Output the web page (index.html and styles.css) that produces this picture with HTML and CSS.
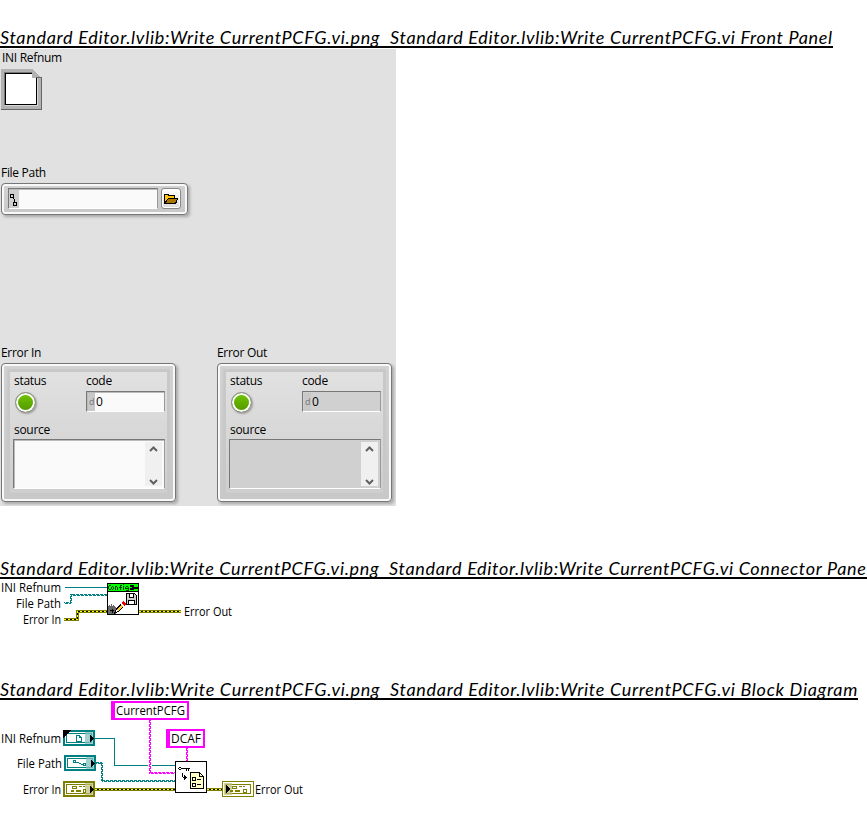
FILE: index.html
```html
<!DOCTYPE html>
<html lang="en">
<head>
<meta charset="utf-8">
<title>Write CurrentPCFG.vi</title>
<link rel="stylesheet" href="styles.css">
</head>
<body>
<section class="section front">
  <h2 class="heading"><span class="title">Standard Editor.lvlib:Write CurrentPCFG.vi.png&nbsp; Standard Editor.lvlib:Write CurrentPCFG.vi Front Panel</span></h2>
  <div class="panel">
    <div class="label refnum-label">INI Refnum</div>
    <svg class="refnum" width="42" height="42" shape-rendering="crispEdges">
      <path fill="#b2b2b2" d="M1 0H32L41 9V41H1Z"/>
      <path fill="#777" d="M4 3H32V4H5V36H4Z"/>
      <path fill="#d9d9d9" d="M37 9h1v28H5v-1h32z"/>
      <rect x="5" y="4" width="32" height="32"/>
      <rect x="6" y="5" width="30" height="30" fill="#fff"/>
      <path fill="#b2b2b2" d="M32 0L41 9H32Z"/>
      <path fill="#e1e1e1" d="M33 0H42V8H41Z"/>
      <path fill="#666" d="M36 8H42V41H1V40H41V9H36Z"/>
    </svg>
    <div class="label path-label">File Path</div>
    <div class="frame path-frame">
      <div class="well path-field">
        <svg width="10" height="18" shape-rendering="crispEdges"><rect width="10" height="18" fill="#cfcfcf"/><path fill="none" stroke="#000" d="M1.500 4.500h3v3h-3zM4.500 12.500h3v3h-3zM4.500 7v2M5.500 9v3"/></svg>
      </div>
      <div class="browse">
        <svg width="16" height="12" shape-rendering="crispEdges"><path d="M1 1h5v1h6v3h3v1l-2 5H1z"/><path fill="#ffc20e" d="M2 2h3v1h6v2H5L3 8H2z"/><path fill="#a87500" d="M5 6h9l-2 4H3z"/></svg>
      </div>
    </div>
    <div class="clusters">
      <div class="cluster-col">
        <div class="label">Error In</div>
        <div class="frame cluster">
          <div class="inner">
            <div class="top-row">
              <div class="status"><div class="label">status</div><div class="led"></div></div>
              <div class="code"><div class="label">code</div><div class="well number"><span class="radix">d</span><span class="value">0</span></div></div>
            </div>
            <div class="label source-label">source</div>
            <div class="well source"><div class="scroll">
              <svg width="9" height="6"><path d="M1 5l3.500-3.500L8 5"/></svg>
              <svg width="9" height="6"><path d="M1 1l3.500 3.500L8 1"/></svg>
            </div></div>
          </div>
        </div>
      </div>
      <div class="cluster-col indicator">
        <div class="label">Error Out</div>
        <div class="frame cluster">
          <div class="inner">
            <div class="top-row">
              <div class="status"><div class="label">status</div><div class="led"></div></div>
              <div class="code"><div class="label">code</div><div class="well number"><span class="radix">d</span><span class="value">0</span></div></div>
            </div>
            <div class="label source-label">source</div>
            <div class="well source"><div class="scroll">
              <svg width="9" height="6"><path d="M1 5l3.500-3.500L8 5"/></svg>
              <svg width="9" height="6"><path d="M1 1l3.500 3.500L8 1"/></svg>
            </div></div>
          </div>
        </div>
      </div>
    </div>
  </div>
</section>

<section class="section connector">
  <h2 class="heading"><span class="title">Standard Editor.lvlib:Write CurrentPCFG.vi.png&nbsp; Standard Editor.lvlib:Write CurrentPCFG.vi Connector Pane</span></h2>
  <svg class="diagram" width="320" height="61" viewBox="0 579 320 61">
    <g class="text">
      <text x="1" y="592" textLength="60" lengthAdjust="spacingAndGlyphs">INI Refnum</text>
      <text x="16" y="608" textLength="45" lengthAdjust="spacingAndGlyphs">File Path</text>
      <text x="23" y="624" textLength="38" lengthAdjust="spacingAndGlyphs">Error In</text>
      <text x="184" y="616" textLength="48" lengthAdjust="spacingAndGlyphs">Error Out</text>
    </g>
    <g shape-rendering="crispEdges">
      <path class="ref" d="M65 587.500H107"/>
      <path class="path-a" d="M65 603.500H71M72 594.500H107"/>
      <path class="path-b" d="M64 602.500H72M71 595.500H107"/>
      <path class="path-a" d="M70.500 603V594"/><path class="path-b" d="M71.500 603V594"/>
      <path class="err" d="M64 619.500H77.500V611.500H107M139 611.500H181"/>
      <path class="err-base" d="M64 619.500H77.500V611.500H107M139 611.500H181"/>
      <path class="err-core" d="M64 619.500H77.500V611.500H107M139 611.500H181"/>
      <rect x="107.500" y="583.500" width="31" height="31" fill="#fff" stroke="#000"/>
      <rect x="107.500" y="583.500" width="31" height="8" fill="#0f0" stroke="#000"/>
      <path fill="none" stroke="#003c00" d="M109 585.500h2M108.500 586v3M109 589.500h2M113.500 587v2M111.500 587v2M112 586.500h1M112 589.500h1M115.500 586v4M116 586.500h1M117.500 587v3M120.500 585v5M119 587.500h3M121 585.500h1M123.500 586v4M123 584.500h1M125.500 587v2M126 586.500h2M128.500 587v4M126 588.500h2M126 590.500h2"/>
      <path fill="none" stroke="#000" stroke-width="2" d="M130 586h3v3h-3M134 588h4"/>
      <path fill="#cfcfcf" stroke="#000" d="M126.500 593.500h8l2 2v9h-10z"/>
      <path fill="#fff" stroke="#000" d="M129.500 593.500h4v4h-4zM128.500 600.500h6v4h-6z"/>
      <path fill="#666" d="M108 606h1v-1h1v1h1v-2h1v2h1v-1h1v1h1v1h1v1h1v2h-1v4h-8z"/>
      <path d="M110 610h4v1h-4zM112 609h1v4h-1z"/>
      <path d="M114 613l2-4 6-7h2l2 3-8 7-4 2z"/>
      <path fill="#ffce38" d="M117 609l4-4 2 2-5 4z"/>
      <path fill="#fff" d="M120 604l1-1 3 3-1 1zM116 610h1l1 1-2 1z"/>
      <path fill="#e00" d="M121 603l2-2 3 3-2 2z"/>
    </g>
  </svg>
</section>

<section class="section block">
  <h2 class="heading"><span class="title">Standard Editor.lvlib:Write CurrentPCFG.vi.png&nbsp; Standard Editor.lvlib:Write CurrentPCFG.vi Block Diagram</span></h2>
  <svg class="diagram" width="320" height="110" viewBox="0 700 320 110">
    <g shape-rendering="crispEdges">
      <path class="ref" d="M95 738.500H114.500V765.500H148M152 765.500H175"/>
      <path class="str-a" d="M149.500 720V773M150 772.500H175M186.500 748V761"/>
      <path class="str-b" d="M150.500 720V773M149 773.500H175M187.500 748V761"/>
      <path class="path-a" d="M96 762.500H102M101.500 763V781M102 780.500H175"/>
      <path class="path-b" d="M96 763.500H102M102.500 763V781M102 781.500H175"/>
      <path class="err" d="M95 789.500H175M207 789.500H222"/>
      <path class="err-base" d="M95 789.500H175M207 789.500H222"/>
      <path class="err-core" d="M95 789.500H175M207 789.500H222"/>

      <rect x="112" y="702" width="76" height="17" fill="#fff" stroke="#f0f" stroke-width="2"/><rect x="111" y="701" width="4" height="19" fill="#f0f"/>
      <rect x="167" y="730" width="37" height="17" fill="#fff" stroke="#f0f" stroke-width="2"/><rect x="166" y="729" width="4" height="19" fill="#f0f"/>

      <g fill="none" stroke="#008080">
        <rect x="64" y="731" width="30" height="14" fill="#fff" stroke-width="2"/>
        <rect x="66.500" y="733.500" width="25" height="9"/>
        <path fill="#80c0c0" fill-opacity=".75" stroke="none" d="M85 732h8v12h-8z"/>
        <path d="M76.500 735.500h3l2 2v4h-5zM79.500 735v2.500h2"/>
        <rect x="65" y="756" width="30" height="14" fill="#fff" stroke-width="2"/>
        <rect x="67.500" y="758.500" width="25" height="9"/>
        <path fill="#80c0c0" fill-opacity=".75" stroke="none" d="M86 757h8v12h-8z"/>
        <path d="M73.500 760.500h2v2h-2zM83.500 763.500h2v2h-2zM76 762.500h3M79 763.500h2M81 764.500h2"/>
      </g>
      <path d="M63 730h8l-8 8zM90 735v7l4-3.500zM91 760v7l4-3.500z"/>

      <g fill="none" stroke="#808000">
        <rect x="64" y="782" width="30" height="14" fill="#fff" stroke-width="2"/>
        <rect x="66.500" y="784.500" width="25" height="9"/>
        <path fill="#c0c080" fill-opacity=".75" stroke="none" d="M85 783h8v12h-8z"/>
        <path d="M72.500 786.500h4v2h-4zM79 786.500h3M83 786.500h2"/>
        <path stroke-width="2" d="M71 791h3M76 791h5"/>
        <rect x="83.500" y="789.500" width="2" height="3"/>
        <rect x="222.500" y="781.500" width="31" height="15" fill="#fff"/>
        <rect x="225.500" y="784.500" width="25" height="9"/>
        <path fill="#c0c080" fill-opacity=".75" stroke="none" d="M224 783h8v12h-8z"/>
        <path d="M232.500 786.500h4v2h-4zM239 786.500h3M243 786.500h2"/>
        <path stroke-width="2" d="M230 791h3M235 791h5"/>
        <rect x="243.500" y="789.500" width="3" height="3"/>
      </g>
      <path d="M90 786v7l4-3.500zM226 785v8l4-4z"/>

      <rect x="175.500" y="761.500" width="31" height="31" fill="#fff" stroke="#000"/>
      <path fill="none" stroke="#000" d="M179 767.500h2M179 769.500h2M178.500 768v1M181.500 768v1M182 768.500h8M186.500 769v2M188.500 769v2M182.500 773v4M183 777.500h4M184.500 775v5M185.500 776v3"/>
      <path fill="#ffffc8" stroke="#000" d="M190.500 772.500h9l4 4v12h-13z"/>
      <path fill="none" stroke="#000" d="M199.500 773v3.500h4M192.500 777.500h3v3h-3zM192.500 783.500h3v3h-3zM197 779.500h4M197 784.500h4"/>
    </g>
    <g class="text">
      <text x="116" y="715" textLength="69" lengthAdjust="spacingAndGlyphs">CurrentPCFG</text>
      <text x="171" y="743" textLength="30" lengthAdjust="spacingAndGlyphs">DCAF</text>
      <text x="1" y="743" textLength="60" lengthAdjust="spacingAndGlyphs">INI Refnum</text>
      <text x="17" y="768" textLength="45" lengthAdjust="spacingAndGlyphs">File Path</text>
      <text x="23" y="794" textLength="38" lengthAdjust="spacingAndGlyphs">Error In</text>
      <text x="255" y="794" textLength="48" lengthAdjust="spacingAndGlyphs">Error Out</text>
    </g>
  </svg>
</section>
</body>
</html>
```
FILE: styles.css
```css
* { box-sizing: border-box; }
html { overflow: hidden; background: #fff; }
body { margin: 0; width: 867px; height: 823px; overflow: hidden; color: #000; font: 12px/16px "Open Sans", "Noto Sans", sans-serif; }
svg { display: block; }

.section { display: flex; flex-direction: column; align-items: flex-start; }
.front { padding-top: 26px; height: 557px; }
.connector { height: 121px; }

.heading { margin: 0; height: 22px; overflow: hidden; border-bottom: 2px solid #000; font: italic 400 18px/22px Lato, sans-serif; letter-spacing: 0.69px; white-space: nowrap; }
.connector .heading { letter-spacing: 0.67px; }
.title { display: block; }

.panel { margin-top: 1px; width: 396px; height: 457px; background: #e1e1e1; overflow: hidden; display: flex; flex-direction: column; align-items: flex-start; }
.label { letter-spacing: -0.3px; white-space: nowrap; height: 16px; }
.refnum-label { margin: 1px 0 0 2px; }
.refnum { margin-top: 3px; }
.path-label { margin: 54px 0 0 1px; }

.frame { border: 1px solid #777; border-radius: 4px; background: linear-gradient(#d2d2d2, #c8c8c8); box-shadow: inset 0 0 0 2px #f8f8f8, 2px 2px 3px rgba(0,0,0,.25); }
.path-frame { margin: 2px 0 0 1px; width: 187px; height: 32px; display: flex; align-items: center; padding: 0 0 1px 6px; gap: 3px; }
.well { border: 1px solid #777; border-right-color: #999; border-bottom-color: #fff; background: #fafafa; box-shadow: inset 1px 1px 0 #bbb; }
.path-field { width: 150px; height: 21px; padding: 1px 0 0; }
.browse { width: 20px; height: 21px; border: 1px solid #888; border-radius: 3px; background: linear-gradient(#fff, #dcdcdc); box-shadow: inset 0 0 0 1px #fff; display: flex; align-items: center; justify-content: center; }

.clusters { display: flex; gap: 41px; margin: 130px 0 0 1px; }
.cluster-col { width: 175px; }
.cluster { margin-top: 2px; height: 139px; padding: 5px; }
.inner { height: 127px; border: 3px solid #c8c8c8; background: linear-gradient(#e1e1e1, #cecece); padding: 1px 0 0 3px; }
.top-row { display: flex; height: 49px; }
.status { width: 73px; padding-left: 1px; }
.led { width: 21px; height: 21px; margin: 3px 0 0 1px; border: 1px solid #888; border-radius: 50%; background: linear-gradient(#71c800, #529400); box-shadow: inset 0 0 0 2px #fff, 1px 1px 2px rgba(0,0,0,.3); }
.number { width: 79px; height: 21px; margin-top: 2px; padding: 1px 0 0 1px; display: flex; line-height: 18px; }
.radix { width: 7px; padding-left: 1px; background: #c8c8c8; color: #777; font-size: 9px; }
.value { padding-left: 1px; }
.source-label { padding-left: 1px; }
.source { width: 152px; height: 50px; margin-top: 1px; display: flex; justify-content: flex-end; padding: 2px 2px 2px 0; }
.scroll { width: 17px; background: #f0f0f0; display: flex; flex-direction: column; justify-content: space-between; align-items: center; padding: 4px 1px 1px 0; }
.scroll path { fill: none; stroke: #606060; stroke-width: 2; }
.indicator .well { background: #d0d0d0; box-shadow: none; }

.diagram .text { font: 12px "Open Sans", "Noto Sans", sans-serif; }
.ref { fill: none; stroke: #008080; }
.path-a, .path-b { fill: none; stroke: #008080; stroke-dasharray: 3 1; }
.path-b { stroke-dashoffset: 2; }
.str-a, .str-b { fill: none; stroke: #f0f; stroke-dasharray: 3 1; }
.str-b { stroke-dashoffset: 2; }
.err { fill: none; stroke: #808000; stroke-width: 3; }
.err-base { fill: none; stroke: #000; }
.err-core { fill: none; stroke: #ff0; stroke-dasharray: 2 2; }
```
